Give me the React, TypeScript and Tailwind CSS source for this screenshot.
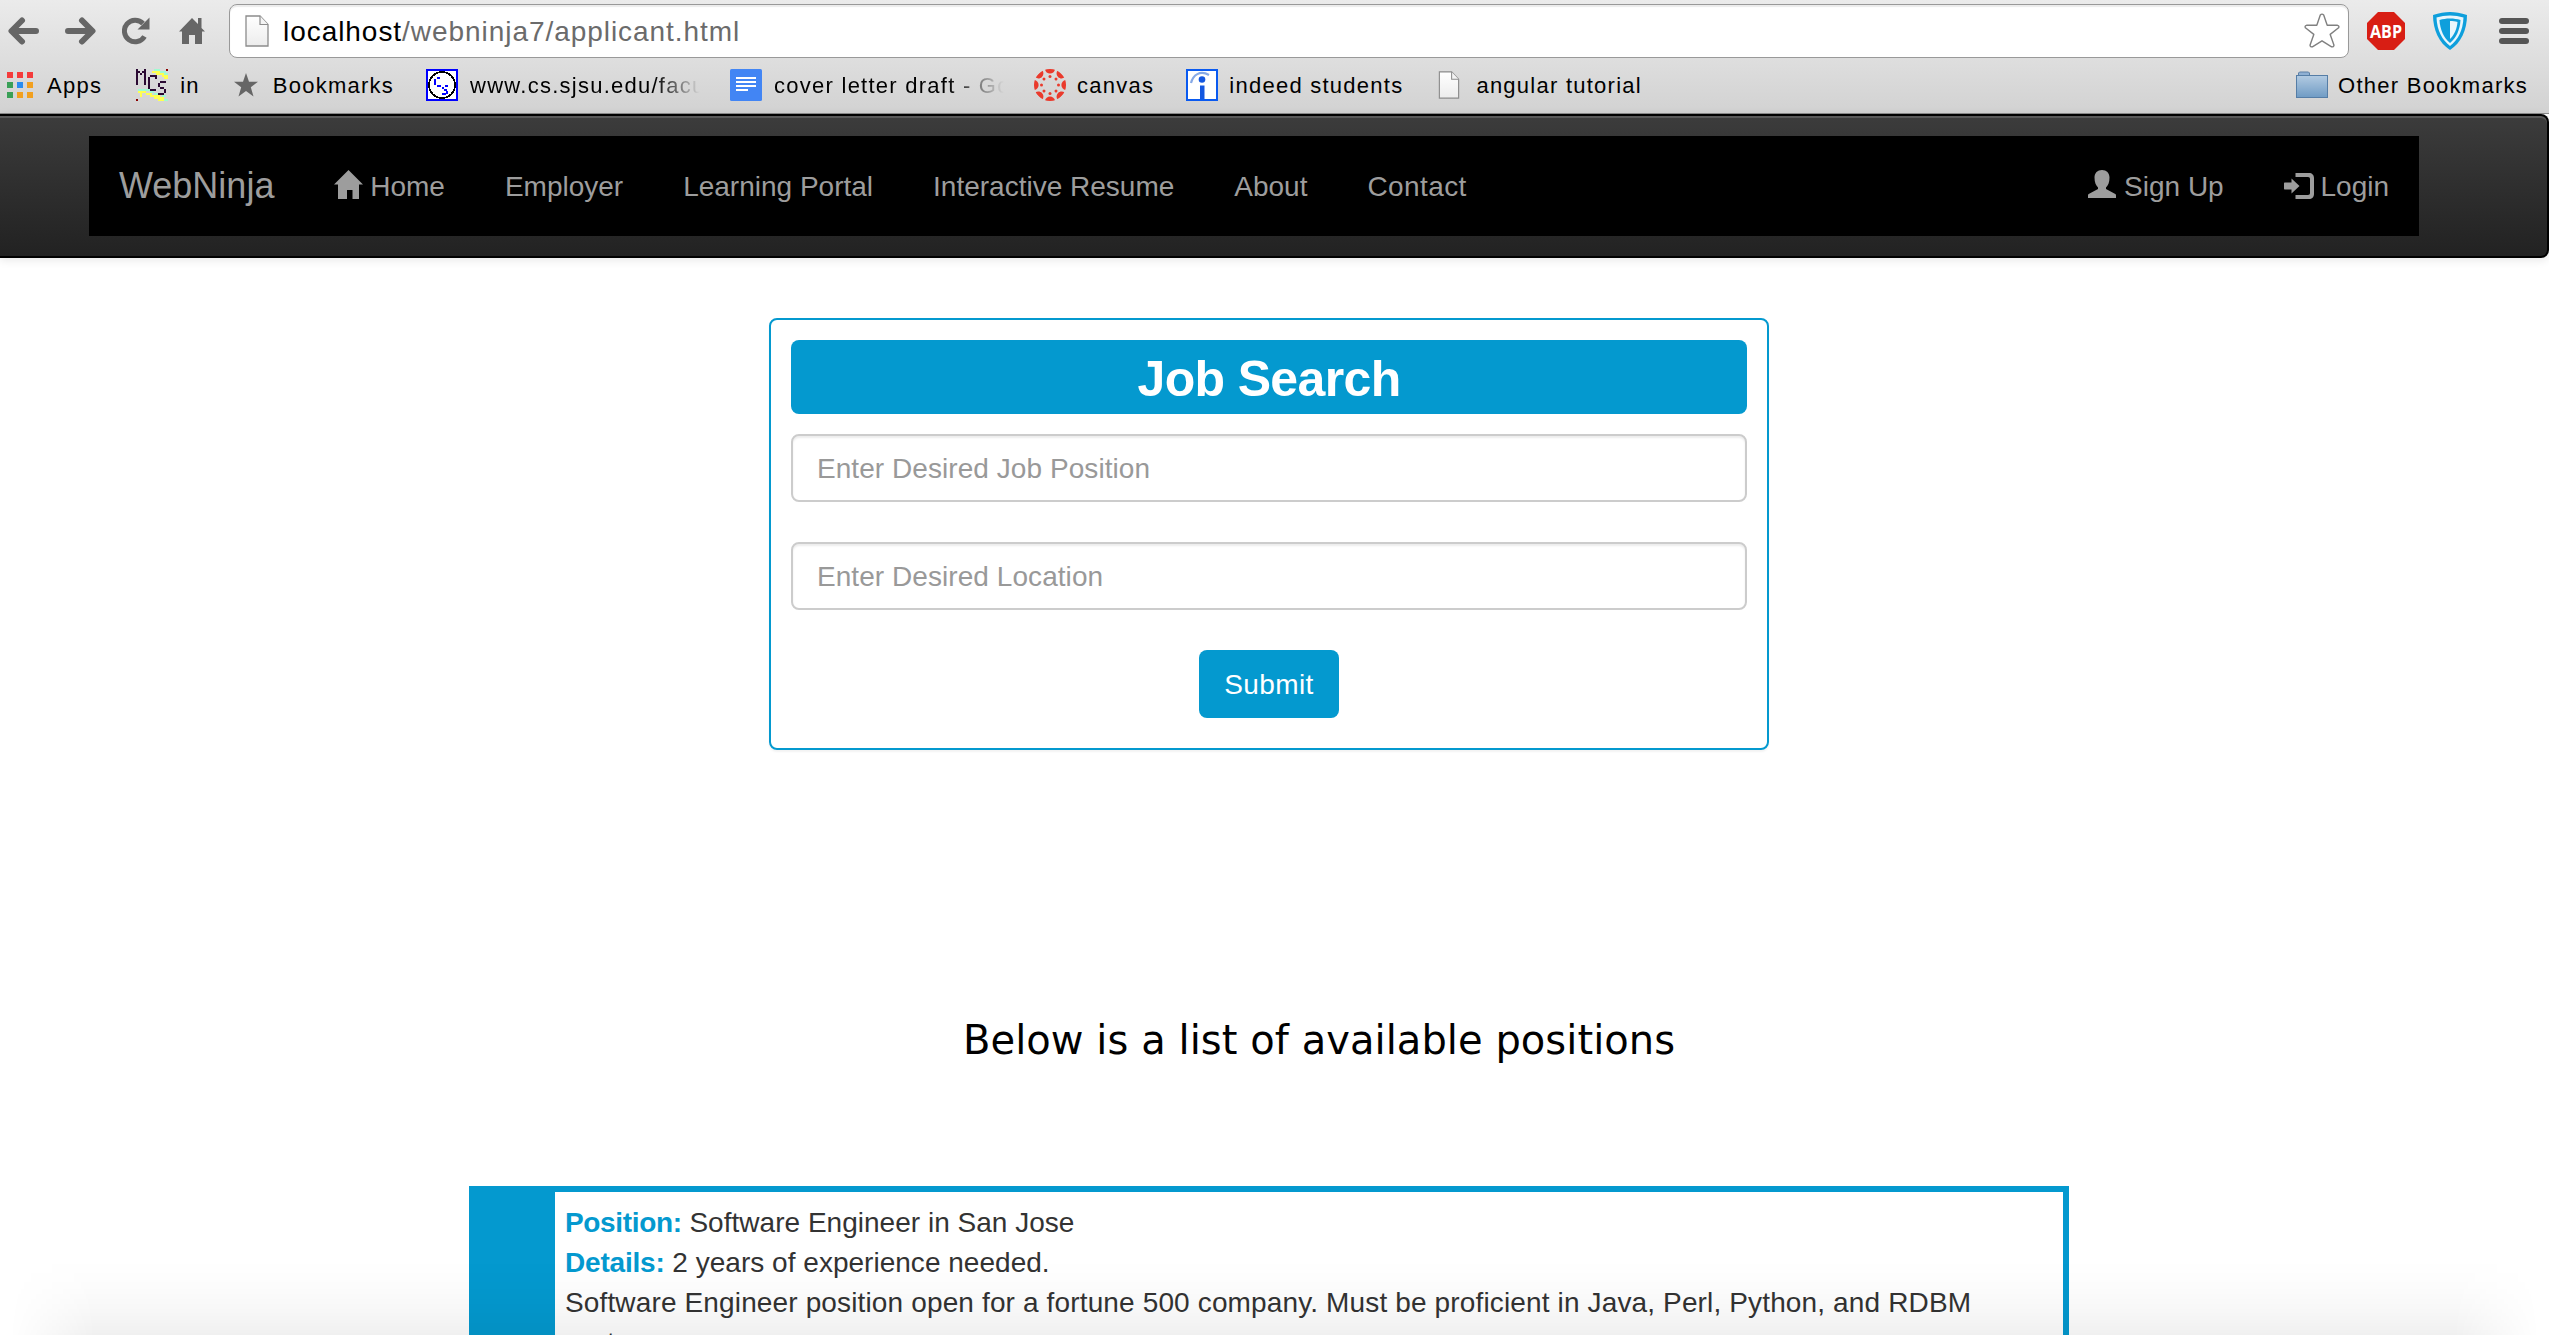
import React from 'react';

const Page = ({ className }: { className: string }) => (
  <svg viewBox="0 0 24 32" className={className}>
    <defs>
      <linearGradient id="pg" x1="0" y1="0" x2="0" y2="1">
        <stop offset="0" stopColor="#fff" />
        <stop offset="1" stopColor="#ececec" />
      </linearGradient>
    </defs>
    <path d="M1 1h14l8 8.500v21.500H1z" fill="url(#pg)" stroke="#8c8c8c" strokeWidth="1.300" />
    <path d="M15 1v8.500h8" fill="#f4f4f4" stroke="#8c8c8c" strokeWidth="1.200" />
  </svg>
);

const Back = ({ className }: { className: string }) => (
  <svg viewBox="0 0 32 28" className={className}>
    <path d="M14 3.500L3.500 14 14 24.500M4 14H28" fill="none" stroke="#666" strokeWidth="6" strokeLinecap="round" strokeLinejoin="round" />
  </svg>
);

const Reload = () => (
  <svg viewBox="0 0 28 28" className="ml-[26px] h-7 w-7 shrink-0">
    <path d="M22.500 19.500A10.800 10.800 0 1 1 21 6.500" fill="none" stroke="#666" strokeWidth="5" strokeLinecap="butt" />
    <path d="M27.500 0.500V12.500H15.500z" fill="#666" />
  </svg>
);

const ChromeHome = () => (
  <svg viewBox="0 0 26 28" className="ml-[29px] h-7 w-[26px] shrink-0">
    <path d="M13 1L0 14.500h3V27h7v-9h6v9h7V14.500h3L22.500 11V1h-3.500v6z" fill="#666" />
  </svg>
);

const Abp = () => (
  <svg viewBox="0 0 38 38" className="ml-[18px] h-[38px] w-[38px] shrink-0">
    <path d="M11 0H27L38 11V27L27 38H11L0 27V11z" fill="#d81e14" />
    <text x="19" y="25.500" textAnchor="middle" textLength="32" lengthAdjust="spacingAndGlyphs" fontSize="18" fontWeight="700" fill="#fff" fontFamily="Open Sans, sans-serif">ABP</text>
  </svg>
);

const Shield = () => (
  <svg viewBox="0 0 34 38" className="ml-7 h-[38px] w-[34px] shrink-0">
    <path d="M17 0C22 0 28 1 34 3 34 18 28 31 17 38 6 31 0 18 0 3 6 1 12 0 17 0z" fill="#0e9fdc" />
    <path d="M17 3.500C22 3.500 26 4.300 30.500 5.500 30 18 25 28 17 34 9 28 4 18 3.500 5.500 8 4.300 12 3.500 17 3.500z" fill="#e8f6fc" />
    <path d="M17 6.500C21 6.500 24 7 27.500 8 27 18 23 26 17 31 11 26 7 18 6.500 8 10 7 13 6.500 17 6.500z" fill="#0e9fdc" />
    <path d="M17 9C20 9 22 9.400 24.500 10 24 17 21 23 17 27z" fill="#e8f6fc" />
  </svg>
);

const COLORS = ['#f43b3b', '#f43b3b', '#f43b3b', '#3aa057', '#2a8cf0', '#f2a01f', '#3aa057', '#f2a01f', '#f2a01f'];

const Mcs = () => (
  <svg viewBox="0 0 32 32" className="ml-[34px] h-8 w-8 shrink-0" shapeRendering="crispEdges" fill="none">
    <path d="M18 1h6M24 3h6M28 5h4M2 21h12M14 23h4M18 25h8M26 27h4M28 31h4" stroke="#a0fbd2" strokeWidth="2" />
    <path d="M16 3h8M20 5h8M26 7h6M28 9h4M2 23h8M4 25h2M10 25h6M4 27h2M14 27h10M18 29h10M22 31h6" stroke="#ffff50" strokeWidth="2" />
    <path d="M1 0V16M9 0V16M2 3h2M4 5h2M6 3h2M20 10V7H14M13 8V20M14 21H20M30 13H24M23 14V18M24 19H28M29 20V24M22 25H28" stroke="#2b0a33" strokeWidth="2" />
    <path d="M30 0h2v2h-2zM0 30h2v2H0z" fill="#8b0000" />
  </svg>
);

const CsIcon = () => (
  <svg viewBox="0 0 32 32" className="ml-[32px] h-8 w-8 shrink-0" shapeRendering="crispEdges">
    <rect x="1" y="1" width="30" height="30" fill="#fff" stroke="#0000ff" strokeWidth="2" />
    <circle cx="16" cy="16" r="13" fill="none" stroke="#000" strokeWidth="1.800" />
    <path d="M14 9h-3M9 10v6M11 17h4M22 17h-3M17 18v2M18 21h3M21 22v3M16 25h4" fill="none" stroke="#0000ff" strokeWidth="2" />
  </svg>
);

const Docs = () => (
  <svg viewBox="0 0 32 32" className="ml-[30px] h-8 w-8 shrink-0">
    <rect width="32" height="32" rx="1.500" fill="#4285f4" />
    <path d="M6 9h20M6 13h20M6 17h20M6 21h12" stroke="#fff" strokeWidth="2" />
  </svg>
);

const Canvas = () => (
  <svg viewBox="0 0 32 32" className="ml-[30px] h-8 w-8 shrink-0" fill="#ea3a2c">
    <defs>
      <clipPath id="cv"><circle cx="16" cy="16" r="16" /></clipPath>
    </defs>
    {[0, 45, 90, 135, 180, 225, 270, 315].map((a) => (
      <g key={a} transform={`rotate(${a} 16 16)`}>
        <path d="M10.800 0h10.400C20.500 3 18.500 4.600 16 4.600S11.500 3 10.800 0z" clipPath="url(#cv)" />
        <circle cx="16" cy="7.500" r="1.500" />
      </g>
    ))}
  </svg>
);

const Indeed = () => (
  <svg viewBox="0 0 32 32" className="ml-[32px] h-8 w-8 shrink-0">
    <rect x="1" y="1" width="30" height="30" fill="#fff" stroke="#0a5af0" strokeWidth="2" />
    <path d="M5 14C7 6 14 1 23 6" fill="none" stroke="#86a9e6" strokeWidth="2.200" />
    <circle cx="16" cy="10.500" r="3.300" fill="#1457e0" />
    <path d="M14 16.500h4.500V30H14z" fill="#1457e0" />
  </svg>
);

const Folder = () => (
  <svg viewBox="0 0 32 28" className="h-7 w-8 shrink-0">
    <defs>
      <linearGradient id="fd" x1="0" y1="0" x2="0" y2="1">
        <stop offset="0" stopColor="#b3cbe2" />
        <stop offset="1" stopColor="#6f9bc4" />
      </linearGradient>
    </defs>
    <path d="M2.500 5V2l1-1h9l1 1v3" fill="#8fb0d3" stroke="#5c7fa5" />
    <rect x=".5" y="4.500" width="31" height="22" fill="url(#fd)" stroke="#557da6" />
  </svg>
);

const GlyphHome = () => (
  <svg viewBox="0 0 29 29" className="mb-1.5 h-[29px] w-[29px]" fill="#9d9d9d">
    <path d="M14.500 0L29 14.500h-4V29h-6.500V20h-5.500V29H4V14.500H0z" />
  </svg>
);
const GlyphUser = () => (
  <svg viewBox="0 0 28 28" className="mb-1.5 h-7 w-7" fill="#9d9d9d">
    <path d="M14 0c4.500 0 7.500 3 7.500 7.500 0 5-1.500 8-3.500 10v1.500l9.300 5c.5.300.7.700.7 1.400V28H0v-2.600c0-.7.200-1.100.7-1.400l9.300-5v-1.500c-2-2-3.500-5-3.500-10C6.500 3 9.500 0 14 0z" />
  </svg>
);
const GlyphLogin = () => (
  <svg viewBox="0 0 30 26" className="mb-[3px] h-[26px] w-[30px]" fill="#9d9d9d">
    <path d="M11.500 0H25c3 0 5 2 5 5v16c0 3-2 5-5 5H11.500v-4H24c1.300 0 2-.7 2-2V6c0-1.300-.7-2-2-2H11.500zM7.500 5.500L15.500 13 7.500 20.500V16.500H1c-.7 0-1-.3-1-1v-5c0-.7.3-1 1-1h6.500z" />
  </svg>
);

const Link = ({ children }: { children: React.ReactNode }) => (
  <a className="flex h-[100px] items-center px-[30px] pt-0.5 whitespace-pre">{children}</a>
);

const Field = ({ placeholder }: { placeholder: string }) => (
  <input
    placeholder={placeholder}
    className="block h-[68px] w-full rounded-lg border-2 border-[#ccc] bg-white px-6 pt-0.5 text-[28px] tracking-[0.06px] shadow-[inset_0_2px_2px_rgba(0,0,0,0.075)] placeholder:text-[#999] placeholder:opacity-100"
  />
);

export default function App() {
  return (
    <div className="relative h-[1335px] w-[2549px] overflow-hidden bg-white font-['Liberation_Sans',Arial,sans-serif] text-[28px] leading-10 text-[#333]">
      <header className="h-[114px] border-b border-[#8a8a8a] bg-linear-to-b from-[#ebebeb] to-[#d2d2d2]">
        <div className="flex h-[62px] items-center pl-[8px]">
          <Back className="h-7 w-8 shrink-0" />
          <Back className="ml-6 h-7 w-8 shrink-0 rotate-180" />
          <Reload />
          <ChromeHome />
          <div className="ml-6 flex h-[54px] w-[2120px] shrink-0 items-center rounded-lg border border-[#999] bg-white pl-[15px] shadow-[inset_0_2px_1px_#ececec]">
            <Page className="h-8 w-6 shrink-0" />
            <span className="ml-3.5 pt-0.5 tracking-[0.95px] text-[#6b6b6b]"><span className="text-black">localhost</span>/webninja7/applicant.html</span>
            <svg viewBox="0 0 36 36" className="mr-2 ml-auto h-9 w-9" fill="none" stroke="#808080" strokeWidth="1.400" strokeLinejoin="round">
              <path d="M16.300 2Q18 .2 19.700 2L23.200 12.300 33.500 12.300Q35.600 13 34.600 14.800L26.200 21.400 30 32.200Q29.600 34.300 27.600 33.800L18 27.800 8.400 33.800Q6.400 34.300 6 32.200L9.800 21.400 1.400 14.800Q.4 13 2.500 12.300L12.800 12.300z" />
            </svg>
          </div>
          <Abp />
          <Shield />
          <svg viewBox="0 0 30 26" className="ml-8 h-[26px] w-[30px] shrink-0" fill="#555">
            <rect width="30" height="6" rx="3" /><rect y="10" width="30" height="6" rx="3" /><rect y="20" width="30" height="6" rx="3" />
          </svg>
        </div>
        <div className="flex h-[46px] items-center pl-[7px] text-[22px] tracking-[1.25px] whitespace-nowrap text-black">
          <div className="grid shrink-0 grid-cols-[6px_6px_6px] gap-[4px]">
            {COLORS.map((c, i) => <i key={i} className="h-1.5 w-1.5" style={{ background: c }} />)}
          </div>
          <span className="ml-3.5 pt-0.5">Apps</span>
          <Mcs />
          <span className="ml-3 pt-0.5">in</span>
          <svg viewBox="0 0 24 24" className="ml-[34px] h-6 w-6 shrink-0" fill="#666"><path d="M12 0l3 8.800h9l-7.200 5.500L19.500 23.500 12 18l-7.500 5.500 2.700-9.200L0 8.800h9z" /></svg>
          <span className="ml-[15px] pt-0.5">Bookmarks</span>
          <CsIcon />
          <span className="ml-3 w-[230px] bg-linear-to-r from-black from-80% to-transparent to-100% bg-clip-text pt-0.5 text-transparent">www.cs.sjsu.edu/facu</span>
          <Docs />
          <span className="ml-3 w-[230px] bg-linear-to-r from-black from-75% to-transparent to-100% bg-clip-text pt-0.5 text-transparent">cover letter draft - Go</span>
          <Canvas />
          <span className="ml-[11px] pt-0.5">canvas</span>
          <Indeed />
          <span className="ml-[11px] pt-0.5">indeed students</span>
          <Page className="ml-[34px] h-7 w-6 shrink-0" />
          <span className="ml-[15px] pt-0.5">angular tutorial</span>
          <div className="mr-[21px] ml-auto flex items-center gap-2.5"><Folder /><span className="pt-0.5">Other Bookmarks</span></div>
        </div>
      </header>

      <div className="h-36 rounded-r-lg border-y-2 border-r-2 border-black bg-linear-to-b from-[#3c3c3c] to-[#222] pt-5 shadow-[inset_0_2px_0_rgba(255,255,255,0.15),0_2px_10px_rgba(0,0,0,0.1)]">
        <nav className="ml-[89px] flex h-[100px] w-[2330px] bg-black text-[#9d9d9d]">
          <a className="flex items-center px-[30px] text-[36px]">WebNinja</a>
          <Link><GlyphHome /><span className="-ml-px"> Home</span></Link>
          <Link>Employer</Link>
          <Link>Learning Portal</Link>
          <Link>Interactive Resume</Link>
          <Link>About</Link>
          <Link><span className="tracking-[0.4px]">Contact</span></Link>
          <div className="ml-auto flex">
            <Link><GlyphUser /> Sign Up</Link>
            <Link><GlyphLogin /><span className="-ml-px"> Login</span></Link>
          </div>
        </nav>
      </div>

      <form className="mt-[60px] ml-[769px] h-[432px] w-[1000px] rounded-lg border-2 border-[#0499cf] p-5 shadow-[0_2px_2px_rgba(0,0,0,0.05)]">
        <h2 className="mb-5 flex h-[74px] items-center justify-center rounded-lg bg-[#0499cf] pt-1 text-[50px] font-bold tracking-[-0.65px] text-white">Job Search</h2>
        <Field placeholder="Enter Desired Job Position" />
        <div className="mt-10"><Field placeholder="Enter Desired Location" /></div>
        <button type="button" className="mx-auto mt-10 block h-[68px] w-[140px] rounded-lg bg-[#0499cf] pt-0.5 tracking-[0.4px] text-white">Submit</button>
      </form>

      <p className="mt-[265px] ml-[963px] h-[59px] font-['DejaVu_Sans',Verdana,sans-serif] text-[40px] leading-[50px] tracking-[0.05px] whitespace-nowrap text-black">Below is a list of available positions</p>

      <section className="mt-28 ml-[469px] h-[300px] w-[1600px] border-6 border-l-[86px] border-[#0499cf] bg-white pt-[11px] pl-2.5 tracking-[0.02px] whitespace-nowrap">
        <div><b className="tracking-[-0.35px] text-[#0499cf]">Position:</b> Software Engineer in San Jose</div>
        <div><b className="tracking-[-0.2px] text-[#0499cf]">Details:</b> 2 years of experience needed.</div>
        <div className="tracking-[0.14px]">Software Engineer position open for a fortune 500 company. Must be proficient in Java, Perl, Python, and RDBM</div>
        <div>systems.</div>
      </section>
      <div className="absolute inset-x-0 bottom-0 h-[75px] bg-[linear-gradient(to_bottom,transparent,rgba(0,0,0,0.01)_35%,rgba(0,0,0,0.03)_68%,rgba(0,0,0,0.06))] mask-[linear-gradient(to_right,transparent_10px,black_95px,black_2454px,transparent_2539px)]" />
    </div>
  );
}
